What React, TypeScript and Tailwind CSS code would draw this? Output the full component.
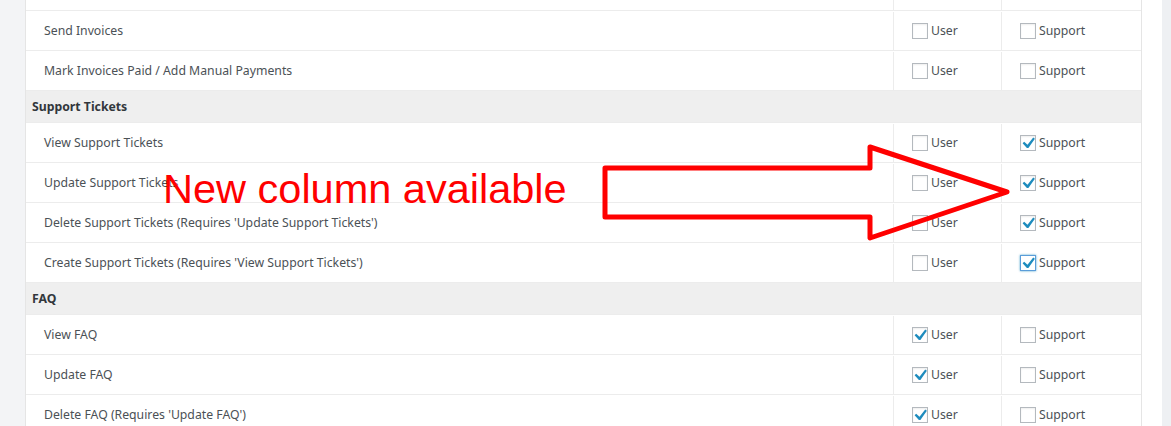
import { Fragment } from "react";

type perm = {
    label: string
    user: boolean
    support: boolean
    focus?: boolean
}

type section = {
    title: string | null
    rows: perm[]
}

const sections: section[] = [
    {
        title: null,
        rows: [
            { label: "Send Invoices", user: false, support: false },
            { label: "Mark Invoices Paid / Add Manual Payments", user: false, support: false },
        ],
    },
    {
        title: "Support Tickets",
        rows: [
            { label: "View Support Tickets", user: false, support: true },
            { label: "Update Support Tickets", user: false, support: true },
            { label: "Delete Support Tickets (Requires 'Update Support Tickets')", user: false, support: true },
            { label: "Create Support Tickets (Requires 'View Support Tickets')", user: false, support: true, focus: true },
        ],
    },
    {
        title: "FAQ",
        rows: [
            { label: "View FAQ", user: true, support: false },
            { label: "Update FAQ", user: true, support: false },
            { label: "Delete FAQ (Requires 'Update FAQ')", user: true, support: false },
        ],
    },
]

const Check = ({ on, focus }: { on: boolean; focus?: boolean }) => {
    return (
        <span
            className={
                focus
                    ? "w-4 h-4 bg-white border border-[#5b9dd9] shadow-[0_0_2px_rgba(30,140,190,0.8)] flex items-center justify-center overflow-visible"
                    : "w-4 h-4 bg-white border border-[#b4b9be] shadow-[inset_0_1px_2px_rgba(0,0,0,0.07)] flex items-center justify-center overflow-visible"
            }
        >
            {on ? (
                <svg width="20" height="20" viewBox="0 0 20 20" className="shrink-0">
                    <path d="M15.2 4.6l1.7 1.2-6.5 9.2H8.9L4.6 10.2l1.6-1.5 3.3 3.1z" fill="#1e8cbe" />
                </svg>
            ) : null}
        </span>
    )
}

const Cell = ({ on, text, focus }: { on: boolean; text: string; focus?: boolean }) => {
    return (
        <div className="border-l border-[#ececec] flex items-center pl-[18px] gap-[3px]">
            <Check on={on} focus={focus} />
            <span>{text}</span>
        </div>
    )
}

const App = () => {
    return (
        <div className="relative w-[1171px] h-[426px] overflow-hidden flex bg-white" style={{ fontFamily: "'Noto Sans', 'Open Sans', sans-serif" }}>
            <div className="w-[25px] bg-[#f3f4f6]"></div>
            <div className="w-[1117px] border-l border-r border-[#e5e5e5] text-[12.25px] text-[#4b5156]">
                <div className="grid grid-cols-[867px_108px_140px] h-[11px] border-b border-[#ececec]">
                    <div></div>
                    <div className="border-l border-[#ececec]"></div>
                    <div className="border-l border-[#ececec]"></div>
                </div>
                {sections.map((sec, i) => (
                    <Fragment key={i}>
                        {sec.title ? (
                            <div className="h-[32px] bg-[#efefef] flex items-center pt-[1px] pl-[6px] font-bold text-[#32373c] border-b border-[#ececec]">
                                {sec.title}
                            </div>
                        ) : null}
                        {sec.rows.map((r, j) => (
                            <div key={j} className="grid grid-cols-[867px_108px_140px] h-[40px] border-b border-[#ececec] pt-[1px]">
                                <div className="flex items-center pl-[18px]">{r.label}</div>
                                <Cell on={r.user} text="User" />
                                <Cell on={r.support} text="Support" focus={r.focus} />
                            </div>
                        ))}
                    </Fragment>
                ))}
            </div>
            <div className="w-[20px] bg-white"></div>
            <div className="flex-1 bg-[#eef0f3]"></div>

            {/* annotation overlay */}
            <div className="absolute left-[163px] top-[168px] text-[41.5px] leading-none text-[#ff0000]" style={{ fontFamily: "'Liberation Sans', Arial, sans-serif" }}>
                New column available
            </div>
            <svg className="absolute left-0 top-0" width="1171" height="426">
                <polygon
                    points="605,168 870,168 870,147 1007,192 870,238 870,217 605,217"
                    fill="none"
                    stroke="#ff0000"
                    strokeWidth="5"
                    strokeLinejoin="round"
                />
            </svg>
        </div>
    )
}

export default App
